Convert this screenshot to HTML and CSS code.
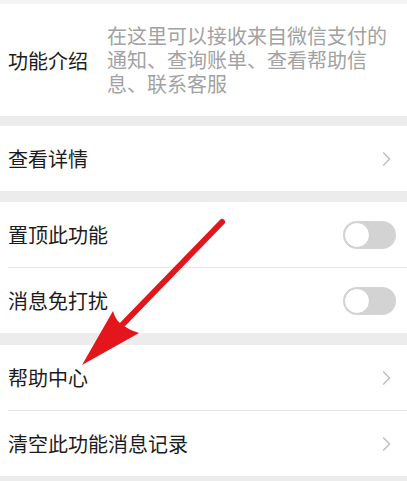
FILE: index.html
```html
<!DOCTYPE html>
<html lang="zh">
<head>
<meta charset="utf-8">
<link rel="stylesheet" href="styles.css">
</head>
<body>
<div class="page">
  <div class="top-gap"></div>
  <section class="intro">
    <div class="intro-label">功能介绍</div>
    <div class="intro-desc">在这里可以接收来自微信支付的通知、查询账单、查看帮助信息、联系客服</div>
  </section>
  <div class="gap g10"></div>
  <section class="group">
    <div class="row row-first"><span class="title">查看详情</span><span class="chev"><svg width="9" height="16" viewBox="0 0 9 16"><path d="M1.2 1.5 L7.5 8 L1.2 14.5" fill="none" stroke="#c2c2c2" stroke-width="1.6"/></svg></span></div>
  </section>
  <div class="gap g11"></div>
  <section class="group">
    <div class="row"><span class="title">置顶此功能</span><span class="toggle"><span class="knob"></span></span></div>
    <div class="sep"></div>
    <div class="row"><span class="title">消息免打扰</span><span class="toggle"><span class="knob"></span></span></div>
  </section>
  <div class="gap g12"></div>
  <section class="group">
    <div class="row"><span class="title">帮助中心</span><span class="chev"><svg width="9" height="16" viewBox="0 0 9 16"><path d="M1.2 1.5 L7.5 8 L1.2 14.5" fill="none" stroke="#c2c2c2" stroke-width="1.6"/></svg></span></div>
    <div class="sep"></div>
    <div class="row"><span class="title">清空此功能消息记录</span><span class="chev"><svg width="9" height="16" viewBox="0 0 9 16"><path d="M1.2 1.5 L7.5 8 L1.2 14.5" fill="none" stroke="#c2c2c2" stroke-width="1.6"/></svg></span></div>
  </section>
  <svg class="arrow" width="407" height="481" viewBox="0 0 407 481">
    <line x1="222" y1="222" x2="122" y2="325" stroke="#e3161b" stroke-width="6" stroke-linecap="round"/>
    <path d="M82 365 L113 311 Q116 322 124 326 Q131 331 139 333 Z" fill="#e3161b"/>
  </svg>
</div>
</body>
</html>
```
FILE: styles.css
```css
html, body {
  margin: 0;
  padding: 0;
}
body {
  background: #ececec;
  font-family: "Noto Sans CJK SC", "Noto Sans", sans-serif;
  color: #1c1c1c;
}
.page {
  position: relative;
  width: 407px;
  height: 481px;
  overflow: hidden;
}
.top-gap {
  height: 4px;
  background: #f4f4f4;
}
.intro {
  background: #fff;
  height: 112px;
  display: flex;
  align-items: center;
  padding-left: 8px;
}
.intro-label {
  width: 99px;
  flex: none;
  font-size: 20px;
}
.intro-desc {
  width: 288px;
  font-size: 20px;
  line-height: 24px;
  color: #a2a2a2;
}
.gap.g10 { height: 10px; }
.gap.g11 { height: 11px; }
.gap.g12 { height: 12px; }
.group {
  background: #fff;
}
.row {
  height: 65px;
  display: flex;
  align-items: center;
  justify-content: space-between;
  padding: 0 11px 0 8px;
}
.row-first {
  height: 65px;
}
.title {
  font-size: 20px;
}
.sep {
  height: 1px;
  margin-left: 8px;
  background: #e6e6e6;
}
.chev {
  display: flex;
  margin-right: 5px;
}
.toggle {
  width: 53px;
  height: 28px;
  border-radius: 14px;
  background: #d3d3d3;
  position: relative;
}
.knob {
  position: absolute;
  left: 1px;
  top: 1px;
  width: 24px;
  height: 24px;
  border-radius: 50%;
  background: #fff;
  border: 1px solid #cfcfcf;
}
.arrow {
  position: absolute;
  left: 0;
  top: 0;
  pointer-events: none;
}
```
